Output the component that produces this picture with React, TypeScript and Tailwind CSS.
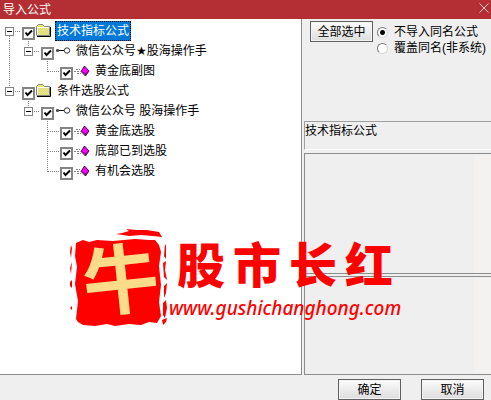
import React, { useState } from 'react';

interface TreeNode {
  id: string;
  label: string;
  level: 1 | 2 | 3;
  last: boolean;
}

const nodes: TreeNode[] = [
  { id: 'tech', label: '技术指标公式', level: 1, last: false },
  { id: 'tech-group', label: '微信公众号★股海操作手', level: 2, last: true },
  { id: 'tech-gold', label: '黄金底副图', level: 3, last: true },
  { id: 'pick', label: '条件选股公式', level: 1, last: true },
  { id: 'pick-group', label: '微信公众号 股海操作手', level: 2, last: true },
  { id: 'pick-gold', label: '黄金底选股', level: 3, last: false },
  { id: 'pick-bottom', label: '底部已到选股', level: 3, last: false },
  { id: 'pick-chance', label: '有机会选股', level: 3, last: true },
];

const dotted = { stroke: '#808080', strokeDasharray: '1 1' };

const Guide = ({ line }: { line: boolean }) => (
  <svg width="19" height="20" className="shrink-0">
    {line && <path d="M9.5 0V20" {...dotted} />}
  </svg>
);

const Expander = ({ up, down }: { up: boolean; down: boolean }) => (
  <svg width="19" height="20" className="shrink-0 overflow-visible">
    {up && <path d="M9.5 0V6" {...dotted} />}
    {down && <path d="M9.5 15V20" {...dotted} />}
    <path d="M15 10.5H21" {...dotted} />
    <rect x="5.5" y="6.5" width="8" height="8" fill="#fff" stroke="#848484" />
    <path d="M7 10.5H12" stroke="#000" />
  </svg>
);

const Branch = ({ last }: { last: boolean }) => (
  <svg width="19" height="20" className="shrink-0 overflow-visible">
    <path d={last ? 'M9.5 0V11' : 'M9.5 0V20'} {...dotted} />
    <path d="M10 10.5H21" {...dotted} />
  </svg>
);

const FolderIcon = () => (
  <svg width="16" height="16" className="shrink-0">
    <path d="M1 12V3L3 1H6L8 3H13V12Z" fill="#eeee4a" />
    <path
      d="M2 5.5H13M3 6.5H13M2 7.5H13M3 8.5H13M2 9.5H13M3 10.5H13M2 11.5H13M3 2.5H7"
      stroke="#d6d6b4"
      strokeDasharray="1 1"
    />
    <path d="M0.5 12V3.5L2.5 1.5H6.5L8.5 3.5H13.5V12.5H0.5" fill="none" stroke="#848484" />
    <path d="M1 4.5H13M1.5 4V12" fill="none" stroke="#fff" />
    <path d="M14.5 4V13.5H1" fill="none" stroke="#000" />
  </svg>
);

const LinkIcon = () => (
  <svg width="16" height="16" className="shrink-0" fill="none" stroke="#000">
    <path d="M3 7.5H9" />
    <rect x="1" y="6" width="3" height="3" rx="1" stroke="none" fill="#555" />
    <circle cx="12" cy="7.5" r="2.7" stroke="#333" />
  </svg>
);

const GemIcon = () => (
  <svg width="16" height="16" className="shrink-0">
    <path d="M2 6.5H6M0 8.5H5M3 10.5H7" stroke="#848484" strokeDasharray="2 1" />
    <path d="M10.5 3L15 8L11.5 13L7 8.5Z" fill="#f0f" stroke="#000" strokeWidth="0.8" />
    <path d="M7.5 8.5L11.5 10.5L15 8M11.5 10.5V13" fill="none" stroke="#800080" />
  </svg>
);

const TreeRow = ({ node, selected, onSelect }: { node: TreeNode; selected: boolean; onSelect: () => void }) => {
  const { id, label, level, last } = node;
  const inFirst = id.startsWith('tech');

  return (
    <li className="flex h-5">
      {level > 1 && <Guide line={inFirst} />}
      {level === 3 && <Guide line={false} />}
      {level === 3 ? <Branch last={last} /> : <Expander up={level === 2 || last} down={level === 1 && !last} />}
      <input
        id={id}
        type="checkbox"
        defaultChecked
        className="peer ml-[3px] mt-1.5 size-[13px] shrink-0 appearance-none border-2 border-[#848484] bg-white"
      />
      {/* the tick is laid over the native box */}
      <svg width="13" height="13" className="pointer-events-none relative -ml-[13px] mt-1.5 hidden shrink-0 peer-checked:block">
        <path d="M3.5 5.5L5.5 8L10 3.5" fill="none" stroke="#000" strokeWidth="2" />
      </svg>
      <span className="ml-px mt-0.5">
        {level === 1 ? <FolderIcon /> : level === 2 ? <LinkIcon /> : <GemIcon />}
      </span>
      <label
        htmlFor={id}
        onClick={onSelect}
        className={`ml-[3px] h-5 whitespace-nowrap border border-dotted px-px leading-[18px] ${
          selected ? 'border-black bg-[#0078d7] text-white' : 'border-transparent'
        }`}
      >
        {label}
      </label>
    </li>
  );
};

const PushButton = ({ children }: { children: React.ReactNode }) => (
  <button className="h-[21px] w-[63px] shrink-0 whitespace-nowrap border border-[#606060] bg-linear-to-b from-[#fcfcfc] to-[#dddddd] text-center leading-[18px] shadow-[inset_0_0_0_1px_#f4f4f4]">
    {children}
  </button>
);

const RadioOption = ({ label, checked }: { label: string; checked?: boolean }) => (
  <label className="flex h-4 items-center gap-1.5 whitespace-nowrap">
    <input
      type="radio"
      name="conflict"
      defaultChecked={checked}
      className="size-[11px] shrink-0 appearance-none rounded-full border border-[#d8d8d8] border-l-[#777] border-t-[#777] bg-white checked:bg-[radial-gradient(circle,#000_2px,#fff_3px)]"
    />
    {label}
  </label>
);

const Watermark = () => (
  <div className="pointer-events-none absolute left-[75px] top-[228px] flex text-[#ff0000]">
    <div className="relative size-[100px] shrink-0">
      <svg width="100" height="100" viewBox="0 0 100 100" fill="#f00" className="overflow-visible">
        <path d="M1 15L8 12L14 14L22 12L38 13L60 11L74 12L80 12L84 17L86 24L84 38L86 57L84 74L86 88L82 95L74 94L66 97L54 96L40 98L32 96L20 98L8 97L3 94L1 91L3 73L0 56L2 39L0 28Z" />
        <path d="M41 6L47 5L54 3L51 1L62 2L72 2L84 4L87 9L78 8L66 7L54 8L48 7Z" />
        <path d="M90 16L91 18L91 31L89 28ZM88 35L91 33L90 42L92 52L89 49ZM89 58L92 55L91 65L89 70ZM88 75L91 72L92 80L90 90L88 87ZM87 92L92 90L91 94L88 97Z" />
        <path d="M-4 17L-3 20L-4 30L-5 24ZM-3 34L-4 46L-5 40ZM-5 54L-3 52L-3 60L-5 58ZM-5 80L-3 78L-3 82Z" />
      </svg>
      <span className="absolute left-[7px] top-1 -rotate-6 font-['Noto_Sans_CJK_SC',sans-serif] text-[76px] font-bold leading-[86px] text-[#fcdc8a]">
        牛
      </span>
    </div>
    <div className="-ml-1.5 mt-1">
      <div className="ml-2 flex gap-2 font-['Noto_Sans_CJK_SC',sans-serif] text-[48px] font-black leading-[60px]">
        <span>股</span>
        <span>市</span>
        <span>长</span>
        <span>红</span>
      </div>
      <div className="mt-1 font-['Noto_Sans','Open_Sans',sans-serif] text-[19px] font-medium italic leading-6">
        www.gushichanghong.com
      </div>
    </div>
  </div>
);

export default function App() {
  const [selected, setSelected] = useState('tech');
  const current = nodes.find((node) => node.id === selected);

  return (
    <div className="relative flex min-h-screen flex-col bg-[#efefef] font-['Liberation_Sans','DejaVu_Sans','Noto_Sans_CJK_SC',sans-serif] text-[12px] text-black">
      <header className="flex h-[19px] items-center justify-between bg-[#b32f33] pl-[3px] pr-0.5 text-white">
        <h1 className="leading-[18px]">导入公式</h1>
        <button aria-label="关闭">
          <svg width="10" height="10" className="-mt-1" stroke="#f0cccc">
            <path d="M0.5 0.5L9.5 9.5M9.5 0.5L0.5 9.5" />
          </svg>
        </button>
      </header>

      <main className="flex flex-1 gap-0.5">
        <ul className="flex-1 border-b border-r border-[#8c8c8c] bg-white pt-0.5">
          {nodes.map((node) => (
            <TreeRow
              key={node.id}
              node={node}
              selected={node.id === selected}
              onSelect={() => setSelected(node.id)}
            />
          ))}
        </ul>

        <section className="flex w-[187px] flex-col">
          <div className="flex h-[102px] items-start gap-1 pl-1.5 pt-0.5">
            <PushButton>全部选中</PushButton>
            <div className="pt-[3px]">
              <RadioOption label="不导入同名公式" checked />
              <RadioOption label="覆盖同名(非系统)" />
            </div>
          </div>
          <p className="h-[29px] border-b border-l border-t border-[#a0a0a0] border-b-white leading-[19px]">
            {current?.label}
          </p>
          <div className="mt-[3px] flex-[121] border-b border-l border-t border-[#8c8c8c] pl-px pt-px">
            <div className="ml-auto h-full w-[17px] bg-[#f3f2f1]" />
          </div>
          <div className="mt-0.5 flex-[98] border-b border-l border-t border-[#8c8c8c] pl-px pt-px">
            <div className="ml-auto h-full w-[17px] bg-[#f3f2f1]" />
          </div>
        </section>
      </main>

      <footer className="flex h-[25px] items-start justify-end gap-5 pr-[7px] pt-1">
        <PushButton>确定</PushButton>
        <PushButton>取消</PushButton>
      </footer>

      <Watermark />
    </div>
  );
}
